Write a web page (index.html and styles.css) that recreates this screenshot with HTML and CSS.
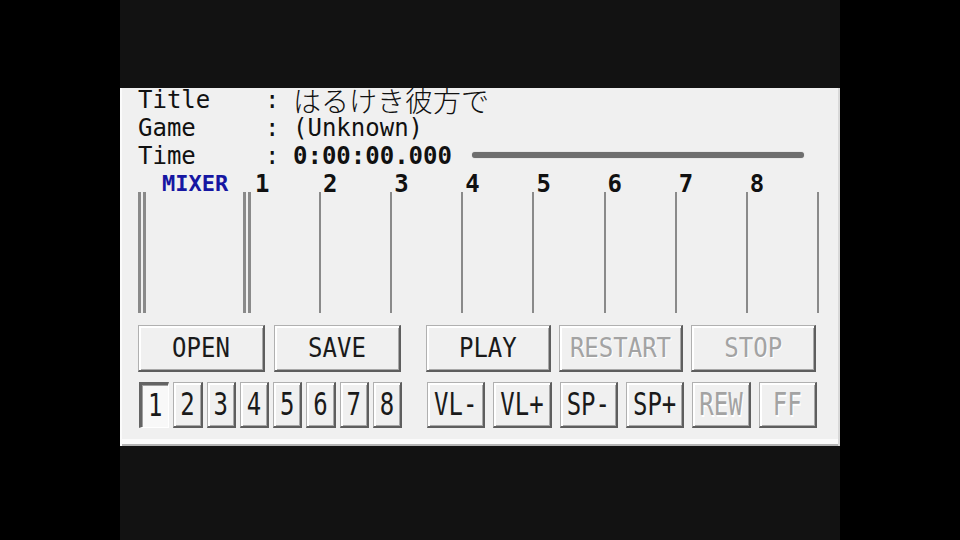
FILE: index.html
```html
<!DOCTYPE html>
<html lang="ja">
<head>
    <meta charset="UTF-8">
    <title>Player</title>
    <link rel="stylesheet" href="styles.css">
</head>
<body>

<div class="screen">
    <div class="panel">

        <div class="info">
            <div class="info-row">
                <span class="info-label">Title</span>
                <span class="info-colon">:</span>
                <span class="info-value jp">はるけき彼方で</span>
            </div>
            <div class="info-row">
                <span class="info-label">Game</span>
                <span class="info-colon">:</span>
                <span class="info-value">(Unknown)</span>
            </div>
            <div class="info-row">
                <span class="info-label">Time</span>
                <span class="info-colon">:</span>
                <span class="info-value time">0:00:00.000</span>
                <div class="seek"></div>
            </div>
        </div>

        <!-- mixer: one column per channel, fader line on the left of each -->
        <div class="mixer">
            <div class="mix-col master">
                <div class="mix-label">MIXER</div>
                <div class="fader"></div>
            </div>
            <div class="mix-col first">
                <div class="mix-label">1</div>
                <div class="fader"></div>
            </div>
            <div class="mix-col">
                <div class="mix-label">2</div>
                <div class="fader"></div>
            </div>
            <div class="mix-col">
                <div class="mix-label">3</div>
                <div class="fader"></div>
            </div>
            <div class="mix-col">
                <div class="mix-label">4</div>
                <div class="fader"></div>
            </div>
            <div class="mix-col">
                <div class="mix-label">5</div>
                <div class="fader"></div>
            </div>
            <div class="mix-col">
                <div class="mix-label">6</div>
                <div class="fader"></div>
            </div>
            <div class="mix-col">
                <div class="mix-label">7</div>
                <div class="fader"></div>
            </div>
            <div class="mix-col">
                <div class="mix-label">8</div>
                <div class="fader"></div>
            </div>
            <div class="mix-col end">
                <div class="mix-label"></div>
                <div class="fader"></div>
            </div>
        </div>

        <div class="btn-row big">
            <div class="btn-group left">
                <button class="btn"><span>OPEN</span></button>
                <button class="btn"><span>SAVE</span></button>
            </div>
            <div class="btn-group right">
                <button class="btn"><span>PLAY</span></button>
                <button class="btn" disabled><span>RESTART</span></button>
                <button class="btn" disabled><span>STOP</span></button>
            </div>
        </div>

        <div class="btn-row small">
            <div class="btn-group left">
                <button class="btn num on"><span>1</span></button>
                <button class="btn num"><span>2</span></button>
                <button class="btn num"><span>3</span></button>
                <button class="btn num"><span>4</span></button>
                <button class="btn num"><span>5</span></button>
                <button class="btn num"><span>6</span></button>
                <button class="btn num"><span>7</span></button>
                <button class="btn num"><span>8</span></button>
            </div>
            <div class="btn-group right">
                <button class="btn"><span>VL-</span></button>
                <button class="btn"><span>VL+</span></button>
                <button class="btn"><span>SP-</span></button>
                <button class="btn"><span>SP+</span></button>
                <button class="btn" disabled><span>REW</span></button>
                <button class="btn" disabled><span>FF</span></button>
            </div>
        </div>

    </div>
</div>

</body>
</html>
```

FILE: styles.css
```css
body {
    margin: 0;
    background: #000;
    font-family: "DejaVu Sans Mono", "Liberation Mono", monospace;
}

.screen {
    width: 720px;
    height: 540px;
    margin: 0 auto;
    padding-top: 88px;
    box-sizing: border-box;
    background: #121212;
}

.panel {
    height: 358px;
    background: #f0f0f0;
    overflow: hidden;
    padding-left: 16px;
    border-left: 2px solid #fbfbfb;
    border-right: 2px solid #d8d8d8;
    box-shadow: inset 0 -2px 0 #b4b4b4, inset 0 -7px 0 #fbfbfb;
    box-sizing: border-box;
}

/* info lines */

.info {
    margin-top: -2px;
    font-size: 24px;
    color: #111;
}

.info-row {
    display: flex;
    align-items: center;
    height: 28px;
    line-height: 28px;
    white-space: nowrap;
}

.info-label {
    width: 127px;
}

.info-colon {
    width: 28px;
}

.jp {
    font-family: "Noto Sans CJK JP", sans-serif;
    font-size: 28px;
    font-weight: 300;
    line-height: 26px;
}

.time {
    font-weight: bold;
}

.seek {
    width: 332px;
    height: 6px;
    margin-left: 20px;
    margin-top: -2px;
    background: #6e6e6e;
    border-radius: 3px;
    box-shadow: 0 0 1px #999;
}

/* mixer */

.mixer {
    display: grid;
    grid-template-columns: 105px 76px repeat(7, 71.15px) 4px;
}

.mix-label {
    height: 22px;
    line-height: 28px;
    padding-left: 4px;
    font-size: 24px;
    font-weight: bold;
    color: #111;
    white-space: nowrap;
}

.master .mix-label {
    padding-left: 24px;
    font-size: 22px;
    color: #1616a2;
}

.first .mix-label {
    padding-left: 12px;
}

.fader {
    height: 121px;
    border-left: 2px solid #8a8a8a;
}

.master .fader,
.first .fader {
    border-left: 8px double #8a8a8a;
}

/* buttons */

.btn-row {
    display: flex;
    gap: 25px;
}

.btn-row.big {
    height: 47px;
    margin-top: 12px;
}

.btn-row.small {
    height: 46px;
    margin-top: 10px;
}

.btn-group {
    display: flex;
    gap: 9px;
}

.btn-group.left {
    width: 263px;
}

.btn-group.right {
    width: 390px;
    gap: 8px;
}

.btn {
    flex: 1;
    padding: 0;
    font-family: "DejaVu Sans Mono", "Liberation Mono", monospace;
    font-size: 24px;
    color: #1a1a1a;
    background: #f0f0f0;
    border: 1px solid;
    border-color: #b0b0b0 #5e5e5e #5e5e5e #b0b0b0;
    border-width: 1px 2px 2px 1px;
    box-shadow: inset 2px 2px 0 #fff, inset -1px -1px 0 #a8a8a8;
}

.btn span {
    display: inline-block;
    transform: scaleY(1.1);
}

.btn:disabled {
    color: #a3a3a3;
    text-shadow: 1px 1px 0 #fff;
}

.small .btn span {
    transform: scaleY(1.3);
}

.small .left {
    gap: 4px;
    margin-left: 1px;
}

.btn.num {
    width: 29px;
}

.btn.on {
    background: #f8f8f8;
    border-color: #646464 #fff #fff #646464;
    border-width: 3px 1px 1px 3px;
    box-shadow: inset 1px 1px 0 #a0a0a0;
}
```
